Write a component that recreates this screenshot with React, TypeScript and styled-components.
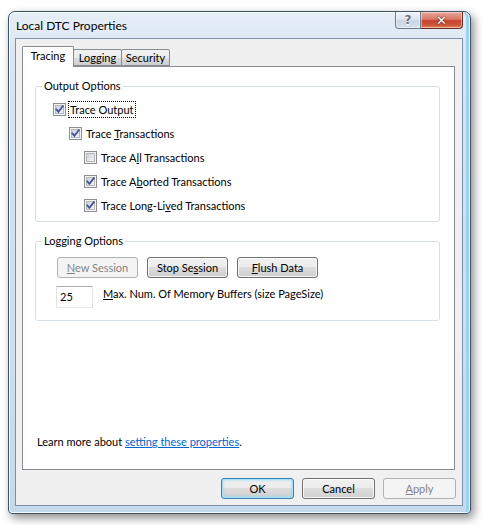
import React, { useId } from "react";
import styled, { createGlobalStyle } from "styled-components";

const FONT = `Lato, "Liberation Sans", sans-serif`;

const GlobalStyle = createGlobalStyle`
  html, body { margin: 0; padding: 0; background: #ffffff; }
  body { font-family: ${FONT}; font-size: 11px; color: #000; }
  * { box-sizing: border-box; }
`;

const Page = styled.div`
  width: 482px;
  height: 525px;
  padding: 11px 0 0 8px;
  background: #ffffff;
`;

const Window = styled.div`
  width: 463px;
  height: 503px;
  display: flex;
  flex-direction: column;
  padding: 0 7px 7px 6px;
  border: 1px solid #3f5368;
  border-radius: 7px 7px 4px 4px;
  background: linear-gradient(180deg, #e6eef7 0%, #d9e6f3 8%, #cddef0 60%, #c6daee 100%);
  box-shadow: 3px 4px 10px rgba(0, 0, 0, 0.45), inset 0 0 0 1px rgba(255, 255, 255, 0.8),
    inset -4px 0 0 0 #9ad2f1;
`;

const TitleBar = styled.div`
  height: 26px;
  display: flex;
  align-items: center;
  padding-left: 1px;
`;

const Title = styled.div`
  font-family: ${FONT};
  font-size: 12px;
  color: #000;
  flex: 1;
  text-shadow: 0 0 6px rgba(255, 255, 255, 0.9);
`;

const Captions = styled.div`
  align-self: flex-start;
  display: flex;
  height: 17px;
`;

const CaptionButton = styled.div<{ $close?: boolean }>`
  width: ${(p) => (p.$close ? 42 : 26)}px;
  height: 17px;
  display: flex;
  align-items: center;
  justify-content: center;
  border: 1px solid ${(p) => (p.$close ? "#6a2b24" : "#6b7c8e")};
  border-top: none;
  border-left-width: ${(p) => (p.$close ? 0 : 1)}px;
  border-radius: ${(p) => (p.$close ? "0 0 4px 0" : "0 0 0 4px")};
  background: ${(p) =>
    p.$close
      ? "linear-gradient(180deg, #e8a699 0%, #d97a68 45%, #c6412e 55%, #cf5a3c 85%, #e08a5c 100%)"
      : "linear-gradient(180deg, #f0f4f8 0%, #dce5ef 45%, #c9d5e2 55%, #d6e1ec 100%)"};
  box-shadow: inset 0 0 0 1px rgba(255, 255, 255, 0.45);
  font-family: "DejaVu Sans", sans-serif;
  font-weight: bold;
  font-size: ${(p) => (p.$close ? 13 : 12)}px;
  color: ${(p) => (p.$close ? "#ffffff" : "#6a737d")};
  text-shadow: ${(p) => (p.$close ? "0 0 2px #5a1a10, 0 0 1px #5a1a10" : "0 1px 0 #ffffff")};
`;

const Client = styled.div`
  flex: 1;
  display: flex;
  flex-direction: column;
  border: 1px solid #7890ab;
  background: #f0f0f0;
  padding: 7px 7px 6px 6px;
`;

const TabStrip = styled.div`
  display: flex;
  align-items: flex-end;
  height: 20px;
  position: relative;
  z-index: 1;
`;

const Tab = styled.div<{ $active?: boolean; $w: number }>`
  width: ${(p) => p.$w}px;
  height: ${(p) => (p.$active ? 21 : 17)}px;
  margin-bottom: ${(p) => (p.$active ? -1 : 0)}px;
  margin-left: ${(p) => (p.$active ? 0 : -1)}px;
  &:first-child {
    margin-left: 0;
  }
  border: 1px solid #898c95;
  border-bottom: ${(p) => (p.$active ? "none" : "1px solid #898c95")};
  border-radius: 2px 2px 0 0;
  background: ${(p) =>
    p.$active ? "#ffffff" : "linear-gradient(180deg, #f2f2f2 0%, #ebebeb 50%, #dddddd 51%, #cfcfcf 100%)"};
  display: flex;
  align-items: center;
  justify-content: center;
  padding-bottom: ${(p) => (p.$active ? 3 : 0)}px;
  font-size: 11px;
  position: relative;
  z-index: ${(p) => (p.$active ? 2 : 1)};
`;

const Panel = styled.div`
  flex: 1;
  display: flex;
  flex-direction: column;
  border: 1px solid #898c95;
  background: #ffffff;
  padding: 11px 14px 19px 12px;
`;

const GroupBox = styled.fieldset<{ $pad: string }>`
  margin: 0;
  min-width: 0;
  border: 1px solid #d5dfe5;
  border-radius: 3px;
  padding: ${(p) => p.$pad};
  & + & {
    margin-top: 11px;
  }
`;

const Legend = styled.legend`
  font-size: 11px;
  line-height: 16px;
  padding: 0 2px;
  margin-left: 0;
`;

const GroupBody = styled.div<{ $indent: number }>`
  padding-left: ${(p) => p.$indent}px;
`;

const CheckRow = styled.div<{ $level: number }>`
  height: 24px;
  display: flex;
  align-items: center;
  margin-left: ${(p) => [0, 16, 31][p.$level]}px;
  gap: 2px;
`;

const CheckLabel = styled.span<{ $focus?: boolean }>`
  font-size: 11px;
  line-height: 15px;
  padding: 0 1px;
  border: 1px dotted ${(p) => (p.$focus ? "#000" : "transparent")};
`;

const U = styled.span`
  text-decoration: underline;
  text-underline-offset: 1px;
`;

const ButtonRow = styled.div`
  display: flex;
  gap: 9px;
`;

const Button = styled.div<{ $w: number; $disabled?: boolean; $default?: boolean }>`
  width: ${(p) => p.$w}px;
  height: 21px;
  display: flex;
  align-items: center;
  justify-content: center;
  font-size: 11px;
  border-radius: 3px;
  border: 1px solid ${(p) => (p.$disabled ? "#adb2b5" : p.$default ? "#3c7fb1" : "#707070")};
  color: ${(p) => (p.$disabled ? "#838383" : "#000")};
  background: ${(p) =>
    p.$disabled
      ? "#f4f4f4"
      : "linear-gradient(180deg, #f2f2f2 0%, #ebebeb 49%, #dddddd 50%, #cfcfcf 100%)"};
  box-shadow: ${(p) =>
    p.$disabled
      ? "none"
      : p.$default
      ? "inset 0 0 0 1px #a5e1f8, inset 0 0 2px 2px rgba(150, 215, 245, 0.5)"
      : "inset 0 0 0 1px rgba(255, 255, 255, 0.75)"};
`;

const BufferRow = styled.div`
  display: flex;
  align-items: flex-start;
  margin-top: 8px;
  margin-left: -1px;
  gap: 10px;
`;

const EditBox = styled.div`
  width: 37px;
  height: 22px;
  border: 1px solid #e2e3ea;
  border-top-color: #abadb3;
  border-bottom-color: #e3e9ef;
  background: #fff;
  font-size: 11px;
  line-height: 20px;
  padding-left: 3px;
`;

const PlainText = styled.div`
  font-size: 11px;
  line-height: 16px;
`;

const LearnMore = styled.div`
  margin-top: auto;
  margin-left: 2px;
  font-size: 11px;
  line-height: 16px;
`;

const Link = styled.a`
  color: #0066cc;
  text-decoration: underline;
  cursor: pointer;
`;

const Footer = styled.div`
  display: flex;
  justify-content: flex-end;
  gap: 8px;
  margin-top: 8px;
  margin-right: -1px;
`;

function CheckBox({ checked }: { checked: boolean }) {
  const id = useId().replace(/:/g, "");
  return (
    <svg width="13" height="13" viewBox="0 0 13 13" style={{ flex: "none" }}>
      <defs>
        <linearGradient id={`g${id}`} x1="0" y1="0" x2="1" y2="1">
          <stop offset="0" stopColor="#cbcfd5" />
          <stop offset="1" stopColor="#f7f7f7" />
        </linearGradient>
      </defs>
      <rect x="0.5" y="0.5" width="12" height="12" fill="#f4f4f4" stroke="#8e8f8f" />
      <rect x="2.5" y="2.5" width="8" height="8" fill={`url(#g${id})`} stroke="#b4b8bd" />
      {checked && (
        <path
          d="M3.3 6.4 L5.4 8.8 L9.8 3.2"
          fill="none"
          stroke="#3f5590"
          strokeWidth="1.8"
          strokeLinecap="square"
        />
      )}
    </svg>
  );
}

export default function App() {
  return (
    <Page>
      <GlobalStyle />
      <Window>
        <TitleBar>
          <Title>Local DTC Properties</Title>
          <Captions>
            <CaptionButton>?</CaptionButton>
            <CaptionButton $close>✕</CaptionButton>
          </Captions>
        </TitleBar>
        <Client>
          <TabStrip>
            <Tab $active $w={52}>Tracing</Tab>
            <Tab $w={49}>Logging</Tab>
            <Tab $w={49}>Security</Tab>
          </TabStrip>
          <Panel>
            <GroupBox $pad="3px 8px 4px 6px">
              <Legend>Output Options</Legend>
              <GroupBody $indent={11}>
                <CheckRow $level={0}>
                  <CheckBox checked />
                  <CheckLabel $focus>Trace Output</CheckLabel>
                </CheckRow>
                <CheckRow $level={1}>
                  <CheckBox checked />
                  <CheckLabel>
                    Trace <U>T</U>ransactions
                  </CheckLabel>
                </CheckRow>
                <CheckRow $level={2}>
                  <CheckBox checked={false} />
                  <CheckLabel>
                    Trace A<U>l</U>l Transactions
                  </CheckLabel>
                </CheckRow>
                <CheckRow $level={2}>
                  <CheckBox checked />
                  <CheckLabel>
                    Trace A<U>b</U>orted Transactions
                  </CheckLabel>
                </CheckRow>
                <CheckRow $level={2}>
                  <CheckBox checked />
                  <CheckLabel>
                    Trace Long-Li<U>v</U>ed Transactions
                  </CheckLabel>
                </CheckRow>
              </GroupBody>
            </GroupBox>
            <GroupBox $pad="8px 8px 12px 6px">
              <Legend>Logging Options</Legend>
              <GroupBody $indent={15}>
                <ButtonRow>
                  <Button $w={81} $disabled>
                    <span>
                      <U>N</U>ew Session
                    </span>
                  </Button>
                  <Button $w={81}>
                    <span>
                      Stop Se<U>s</U>sion
                    </span>
                  </Button>
                  <Button $w={81}>
                    <span>
                      <U>F</U>lush Data
                    </span>
                  </Button>
                </ButtonRow>
                <BufferRow>
                  <EditBox>25</EditBox>
                  <PlainText>
                    <U>M</U>ax. Num. Of Memory Buffers (size PageSize)
                  </PlainText>
                </BufferRow>
              </GroupBody>
            </GroupBox>
            <LearnMore>
              Learn more about <Link>setting these properties</Link>.
            </LearnMore>
          </Panel>
          <Footer>
            <Button $w={73} $default>
              OK
            </Button>
            <Button $w={73}>Cancel</Button>
            <Button $w={73} $disabled>
              <span>
                <U>A</U>pply
              </span>
            </Button>
          </Footer>
        </Client>
      </Window>
    </Page>
  );
}
